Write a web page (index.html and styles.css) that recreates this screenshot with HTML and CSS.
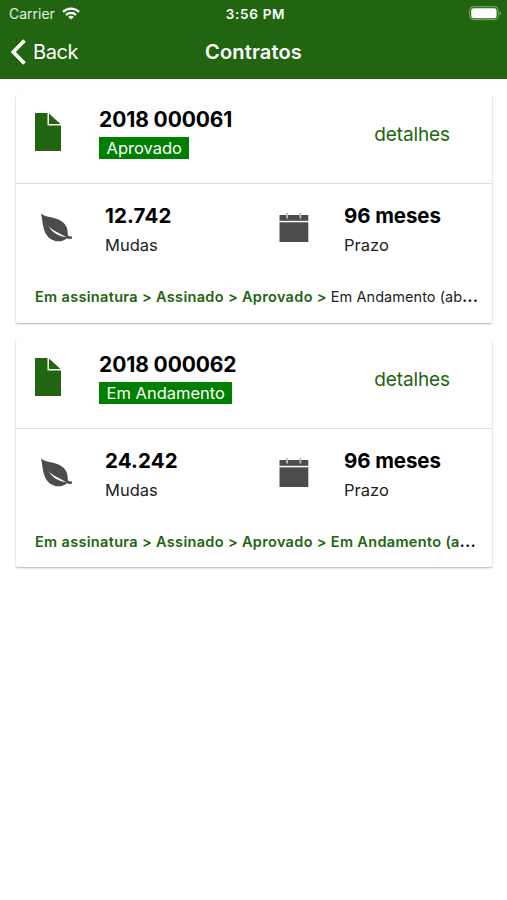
FILE: index.html
```html
<!DOCTYPE html>
<html lang="pt-BR">
<head>
    <meta charset="UTF-8">
    <meta name="viewport" content="width=device-width, initial-scale=1.0">
    <title>Contratos</title>
    <link rel="stylesheet" href="styles.css">
</head>
<body>
    <!-- Shared icons -->
    <svg class="sprite" width="0" height="0">
        <symbol id="iconFile" viewBox="0 0 26 38">
            <path d="M0 0h12.500v12.500H26V38H0z"/>
            <path d="M14 0.500L25.500 11H14z"/>
        </symbol>
        <symbol id="iconLeaf" viewBox="0 0 32 30">
            <path d="M0 0.500C4.500 4.200 12.500 4 18.500 7C25.500 10.500 27 16 26.800 22.300C28 23.600 29.500 23.500 31 23.200V25.500C29 26.200 27.300 25.900 26 25.300C21.500 29.500 13.500 29.300 8.500 25.200C1.500 19.500 2 9 0 0.500z"/>
            <path d="M7 12.500C11.500 18 18.500 19.500 25.200 24.300C17.500 23.300 11.500 20 7 12.500z" fill="#fff"/>
        </symbol>
        <symbol id="iconCalendar" viewBox="0 0 30 30">
            <path d="M0.500 2H29.300V7.800H0.500z"/>
            <path d="M0.500 9.300H29.300V29H0.500z"/>
            <path d="M7.200 0H9V5.500H7.200zM20.500 0H22.300V5.500H20.500z" fill="#bbb"/>
        </symbol>
    </svg>

    <!-- Header -->
    <header class="header">
        <div class="status-bar">
            <div class="carrier">
                <span>Carrier</span>
                <svg width="18" height="13" viewBox="0 0 18 13" fill="none" stroke="#fff" stroke-width="2.200">
                    <path d="M1 4.900C5.500 0.500 12.500 0.500 17 4.900"/>
                    <path d="M4 8C6.800 5.200 11.200 5.200 14 8"/>
                    <path d="M6.200 9.900C7.800 8.400 10.200 8.400 11.800 9.900L9 12.600z" fill="#fff" stroke="none"/>
                </svg>
            </div>
            <span class="time">3:56 PM</span>
            <svg class="battery" width="33" height="15" viewBox="0 0 33 15">
                <rect x="0.700" y="0.700" width="28.600" height="13" rx="3.800" fill="none" stroke="#fff" stroke-opacity="0.450"/>
                <rect x="2.200" y="2.200" width="25.400" height="10" rx="2.300" fill="#fff"/>
                <path d="M30.700 5.200C32.300 5.900 32.300 8.500 30.700 9.200z" fill="#fff" fill-opacity="0.450"/>
            </svg>
        </div>
        <nav class="navbar">
            <a class="back" href="#">
                <svg width="16" height="26" viewBox="0 0 16 26"><path d="M14.500 1.500L3.300 13L14.500 24.500" fill="none" stroke="#fff" stroke-width="3.700"/></svg>
                <span>Back</span>
            </a>
            <h1>Contratos</h1>
        </nav>
    </header>

    <!-- Contract list -->
    <main class="content">
        <section class="card">
            <div class="card-header">
                <svg class="icon-file"><use href="#iconFile"/></svg>
                <div class="contract">
                    <h2>2018 000061</h2>
                    <span class="badge">Aprovado</span>
                </div>
                <a class="details" href="#">detalhes</a>
            </div>
            <div class="info">
                <svg class="icon-leaf"><use href="#iconLeaf"/></svg>
                <div class="info-item">
                    <strong class="seedlings">12.742</strong>
                    <span>Mudas</span>
                </div>
                <svg class="icon-calendar"><use href="#iconCalendar"/></svg>
                <div class="info-item">
                    <strong>96 meses</strong>
                    <span>Prazo</span>
                </div>
            </div>
            <p class="steps"><b>Em assinatura &gt; Assinado &gt; Aprovado &gt; </b><span>Em Andamento (ab</span>...</p>
        </section>

        <section class="card">
            <div class="card-header">
                <svg class="icon-file"><use href="#iconFile"/></svg>
                <div class="contract">
                    <h2>2018 000062</h2>
                    <span class="badge">Em Andamento</span>
                </div>
                <a class="details" href="#">detalhes</a>
            </div>
            <div class="info">
                <svg class="icon-leaf"><use href="#iconLeaf"/></svg>
                <div class="info-item">
                    <strong class="seedlings">24.242</strong>
                    <span>Mudas</span>
                </div>
                <svg class="icon-calendar"><use href="#iconCalendar"/></svg>
                <div class="info-item">
                    <strong>96 meses</strong>
                    <span>Prazo</span>
                </div>
            </div>
            <p class="steps"><b>Em assinatura &gt; Assinado &gt; Aprovado &gt; Em Andamento (a</b>...</p>
        </section>
    </main>
</body>
</html>
```

FILE: styles.css
```css
* {
    box-sizing: border-box;
}
body {
    font-family: Inter, "Liberation Sans", sans-serif;
    margin: 0;
    background-color: #fff;
    color: #000;
}
h1, h2, p {
    margin: 0;
}
a {
    text-decoration: none;
}
.sprite {
    display: block;
}

/* Header */
.header {
    height: 79px;
    background-color: #226510;
    color: #fff;
}
.status-bar {
    display: grid;
    grid-template-columns: 1fr auto 1fr;
    align-items: center;
    height: 27px;
    padding: 0 5px 0 9px;
}
.carrier {
    display: flex;
    align-items: center;
    gap: 7px;
    font-size: 14px;
    color: #e6efe4;
}
.time {
    font-size: 13.5px;
    font-weight: 600;
    letter-spacing: 0.7px;
}
.battery {
    justify-self: end;
}
.navbar {
    display: grid;
    grid-template-columns: 1fr auto 1fr;
    align-items: center;
    height: 50px;
    padding: 0 10px;
}
.back {
    display: flex;
    align-items: center;
    gap: 7px;
    font-size: 20px;
    letter-spacing: -0.4px;
    color: #fff;
}
.navbar h1 {
    font-size: 20px;
    font-weight: 600;
    letter-spacing: 0.15px;
}

/* Cards */
.content {
    padding: 15px 15px 0 16px;
}
.card {
    height: 228.5px;
    margin-bottom: 16px;
    border-radius: 2px;
    background-color: #fff;
    box-shadow: 0 1px 2px rgba(0, 0, 0, 0.3);
}
.card-header {
    display: flex;
    height: 90px;
    padding: 12px 42px 0 19px;
    border-bottom: 1px solid #dedede;
}
.icon-file {
    width: 26px;
    height: 38px;
    margin: 7px 38px 0 0;
    fill: #226510;
}
.contract {
    flex: 1;
}
.contract h2 {
    font-size: 21px;
    font-weight: 700;
    letter-spacing: -0.1px;
    line-height: 27px;
}
.badge {
    display: block;
    width: max-content;
    height: 22px;
    margin-top: 4px;
    padding: 0 7.5px;
    background-color: #008000;
    color: #fff;
    font-size: 16.5px;
    line-height: 23px;
}
.details {
    margin-top: 16px;
    color: #226510;
    font-size: 19px;
    letter-spacing: -0.1px;
    line-height: 26px;
}

/* Seedlings and term */
.info {
    display: grid;
    grid-template-columns: 64px 174px 65px 1fr;
    height: 102px;
    padding: 19px 0 0 25px;
}
.icon-leaf {
    width: 32px;
    height: 30px;
    margin-top: 10px;
    fill: #4c4c4c;
}
.icon-calendar {
    width: 30px;
    height: 30px;
    margin-top: 10px;
    fill: #4c4c4c;
}
.info-item strong,
.info-item span {
    display: block;
}
.info-item strong {
    font-size: 20.5px;
    font-weight: 700;
    letter-spacing: -0.1px;
    line-height: 26px;
}
.info-item .seedlings {
    letter-spacing: 0.15px;
}
.info-item span {
    margin-top: 5px;
    color: #222;
    font-size: 16.5px;
    line-height: 22px;
}
.steps {
    padding-left: 19px;
    font-size: 14.5px;
    font-weight: 700;
    letter-spacing: 0.6px;
    line-height: 22px;
    white-space: nowrap;
}
.steps b {
    color: #226510;
    font-weight: 600;
    letter-spacing: 0.33px;
}
.steps span {
    color: #222;
    font-weight: 400;
    letter-spacing: 0.05px;
}
```
